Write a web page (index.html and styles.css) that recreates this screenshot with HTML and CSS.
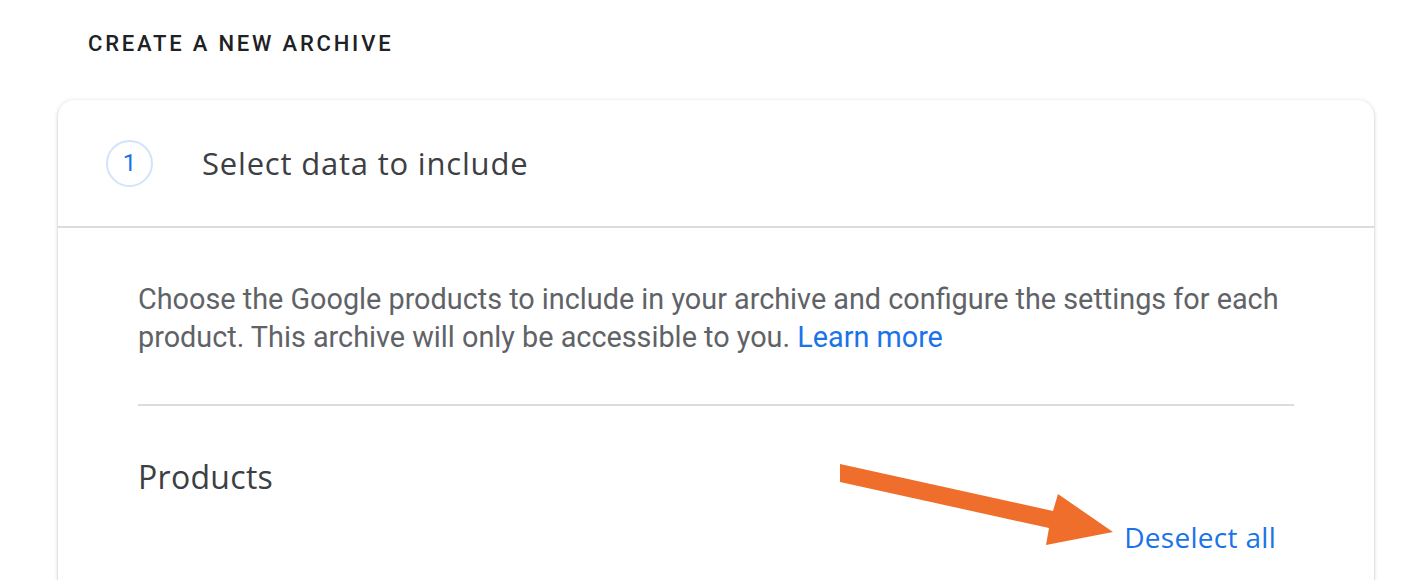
FILE: index.html
```html
<!DOCTYPE html>
<html>
<head>
    <title>Create a new archive</title>
    <link rel="stylesheet" href="styles.css">
</head>
<body>
    <h1 class="page-title">CREATE A NEW ARCHIVE</h1>

    <div class="card">
        <div class="step-header">
            <div class="step-number">1</div>
            <h2 class="step-title">Select data to include</h2>
        </div>
        <div class="step-body">
            <p class="intro">Choose the Google products to include in your archive and configure the settings for each product. This archive will only be accessible to you. <a class="link" href="#">Learn more</a></p>
            <hr class="rule">
            <div class="products-row">
                <h3 class="products-title">Products</h3>
            </div>
            <div class="actions">
                <a class="deselect" href="#">Deselect all</a>
            </div>
        </div>
    </div>

    <svg class="arrow" width="1402" height="580" viewBox="0 0 1402 580">
        <polygon points="840,464 1053,511 1058,494 1113,532 1046,545 1049,528 840,482" fill="#f06e2b"/>
    </svg>
</body>
</html>
```

FILE: styles.css
```css
body {
    margin: 0;
    background: #fff;
    font-family: Roboto, "Liberation Sans", sans-serif;
    position: relative;
    height: 580px;
    overflow: hidden;
}
.page-title {
    margin: 0;
    padding: 31px 0 0 88px;
    font-size: 22px;
    line-height: 26px;
    font-weight: 500;
    letter-spacing: 2.8px;
    color: #202124;
}
.card {
    margin: 43px 28px 0 58px;
    border-radius: 16px;
    background: #fff;
    box-shadow: 0 1px 2px 0 rgba(60, 64, 67, .25), 0 1px 4px 1px rgba(60, 64, 67, .12);
}
.step-header {
    display: flex;
    align-items: center;
    height: 126px;
    padding-left: 48px;
    border-bottom: 2px solid #dadce0;
}
.step-number {
    width: 43px;
    height: 43px;
    border: 2px solid #d2e3fc;
    border-radius: 50%;
    display: flex;
    align-items: center;
    justify-content: center;
    font-size: 24px;
    font-weight: 400;
    color: #1a73e8;
}
.step-title {
    margin: 0 0 0 49px;
    font-family: "Open Sans", Roboto, sans-serif;
    font-size: 31px;
    font-weight: 400;
    letter-spacing: .8px;
    color: #3c4043;
}
.step-body {
    padding: 0 80px 60px;
}
.intro {
    margin: 0;
    padding: 52px 0 48px;
    font-size: 28.8px;
    line-height: 38px;
    color: #5f6368;
}
.link {
    color: #1a73e8;
    text-decoration: none;
}
.rule {
    margin: 0;
    border: 0;
    border-top: 2px solid #dadce0;
}
.products-title {
    margin: 0;
    padding-top: 49px;
    font-family: "Open Sans", Roboto, sans-serif;
    font-size: 32px;
    font-weight: 400;
    letter-spacing: .3px;
    color: #3c4043;
}
.actions {
    display: flex;
    justify-content: flex-end;
    padding: 20px 18px 0 0;
}
.deselect {
    font-family: "Open Sans", Roboto, sans-serif;
    font-size: 28px;
    font-weight: 500;
    letter-spacing: .3px;
    color: #1a73e8;
    text-decoration: none;
}
.arrow {
    position: absolute;
    left: 0;
    top: 0;
    pointer-events: none;
}
```
